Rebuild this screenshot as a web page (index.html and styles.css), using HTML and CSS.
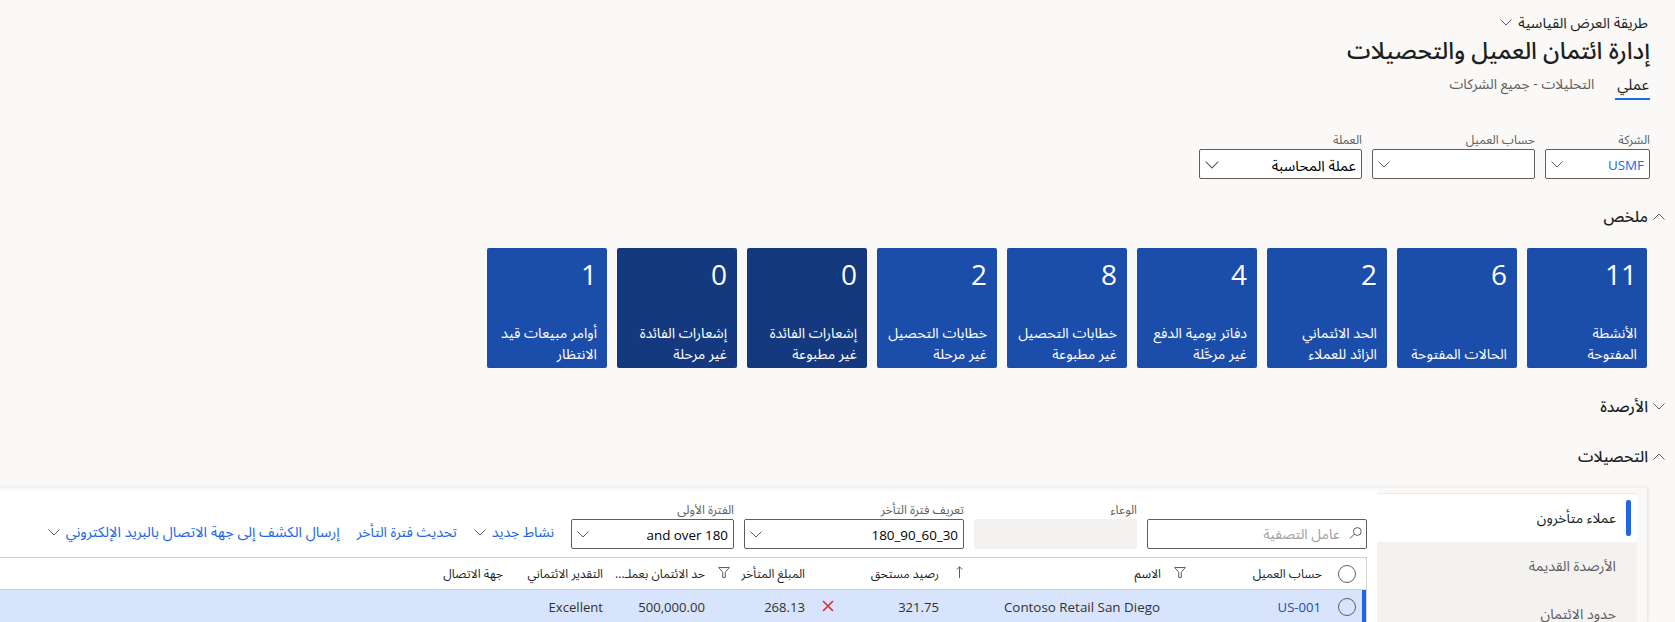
FILE: index.html
```html
<!DOCTYPE html>
<html lang="ar" dir="rtl">
<head>
<meta charset="utf-8">
<title>إدارة ائتمان العميل والتحصيلات</title>
<link rel="stylesheet" href="styles.css">
</head>
<body>
<svg class="defs" aria-hidden="true">
  <symbol id="down" viewBox="0 0 12 7"><path d="M.5.5 6 6 11.5.5"/></symbol>
  <symbol id="up" viewBox="0 0 12 7"><path d="M.5 6.5 6 1l5.5 5.5"/></symbol>
  <symbol id="filter" viewBox="0 0 12 11"><path d="M.7.5h10.6L7.3 5.2v5.2H4.7V5.2z"/></symbol>
</svg>
<header class="page-head">
  <button class="view">طريقة العرض القياسية<svg class="chev"><use href="#down"/></svg></button>
  <h1>إدارة ائتمان العميل والتحصيلات</h1>
  <nav class="tabs"><a class="tab active">عملي</a><a class="tab">التحليلات - جميع الشركات</a></nav>
  <div class="filters">
    <label class="field company"><span>الشركة</span><div class="box link"><b>USMF</b><svg class="chev"><use href="#down"/></svg></div></label>
    <label class="field"><span>حساب العميل</span><div class="box"><b></b><svg class="chev"><use href="#down"/></svg></div></label>
    <label class="field"><span>العملة</span><div class="box"><b class="arabic">عملة المحاسبة</b><svg class="chev big"><use href="#down"/></svg></div></label>
  </div>
</header>

<h2 class="section summary"><svg class="chev"><use href="#up"/></svg>ملخص</h2>
<div class="tiles">
  <div class="tile"><strong>11</strong><span>الأنشطة<br>المفتوحة</span></div>
  <div class="tile"><strong>6</strong><span>الحالات المفتوحة</span></div>
  <div class="tile"><strong>2</strong><span>الحد الائتماني<br>الزائد للعملاء</span></div>
  <div class="tile"><strong>4</strong><span>دفاتر يومية الدفع<br>غير مرحَّلة</span></div>
  <div class="tile"><strong>8</strong><span>خطابات التحصيل<br>غير مطبوعة</span></div>
  <div class="tile"><strong>2</strong><span>خطابات التحصيل<br>غير مرحلة</span></div>
  <div class="tile zero"><strong>0</strong><span>إشعارات الفائدة<br>غير مطبوعة</span></div>
  <div class="tile zero"><strong>0</strong><span>إشعارات الفائدة<br>غير مرحلة</span></div>
  <div class="tile"><strong>1</strong><span>أوامر مبيعات قيد<br>الانتظار</span></div>
</div>
<h2 class="section balances"><svg class="chev"><use href="#down"/></svg>الأرصدة</h2>
<h2 class="section collections"><svg class="chev"><use href="#up"/></svg>التحصيلات</h2>

<section class="panel">
  <nav class="side">
    <a class="side-tab active">عملاء متأخرون</a>
    <a class="side-tab">الأرصدة القديمة</a>
    <a class="side-tab">حدود الائتمان</a>
  </nav>
  <div class="content">
    <div class="toolbar">
      <div class="search"><svg viewBox="0 0 13 12"><circle cx="8.3" cy="4.5" r="3.9"/><path d="M5.4 7.3.6 11.6"/></svg>عامل التصفية</div>
      <label class="field"><span>الوعاء</span><div class="box disabled"></div></label>
      <label class="field wide"><span>تعريف فترة التأخر</span><div class="box"><b dir="ltr">180_90_60_30</b><svg class="chev"><use href="#down"/></svg></div></label>
      <label class="field"><span>الفترة الأولى</span><div class="box"><b dir="ltr">and over 180</b><svg class="chev"><use href="#down"/></svg></div></label>
      <div class="actions">
        <button>نشاط جديد<svg class="chev"><use href="#down"/></svg></button>
        <button>تحديث فترة التأخر</button>
        <button class="send">إرسال الكشف إلى جهة الاتصال بالبريد الإلكتروني<svg class="chev"><use href="#down"/></svg></button>
      </div>
    </div>
    <div class="grid">
      <div class="row head">
        <i class="pick"></i>
        <div>حساب العميل<svg class="filter"><use href="#filter"/></svg></div>
        <div>الاسم<svg class="arrow" viewBox="0 0 7 12"><path d="M3.5 12V.8M.7 3.6 3.5.8l2.8 2.8"/></svg></div>
        <div>رصيد مستحق</div>
        <div>المبلغ المتأخر<svg class="filter"><use href="#filter"/></svg></div>
        <div>حد الائتمان بعملـ...</div>
        <div>التقدير الائتماني</div>
        <div>جهة الاتصال</div>
      </div>
      <div class="row selected">
        <i class="pick"></i>
        <div class="account"><bdi>US-001</bdi></div>
        <div class="name">Contoso Retail San Diego</div>
        <div>321.75<svg class="cross" viewBox="0 0 12 12"><path d="m1 1 10 10M11 1 1 11"/></svg></div>
        <div>268.13</div>
        <div>500,000.00</div>
        <div>Excellent</div>
        <div></div>
      </div>
    </div>
  </div>
</section>
</body>
</html>
```
FILE: styles.css
```css
* { box-sizing: border-box; }
html, body { height: 622px; overflow: hidden; }
body {
  margin: 0;
  display: flex;
  flex-direction: column;
  background: #faf9f8;
  color: #201f1e;
  font: 14px/20px "Open Sans", "Noto Sans Arabic", "DejaVu Sans", sans-serif;
  white-space: nowrap;
}
svg { fill: none; stroke: #605e5c; stroke-width: 1; flex: none; }
.defs { display: none; }
.chev { width: 12px; height: 7px; }
button { border: 0; padding: 0; background: none; font: inherit; color: inherit; display: flex; align-items: center; }
h1, h2 { margin: 0; font-weight: 400; }

.page-head { padding: 13px 25px 0; }
.view { font-size: 14.7px; line-height: 20px; gap: 6px; padding-right: 2px; position: relative; top: -1px; }
h1 { font-size: 23.7px; line-height: 34px; font-weight: 500; }
.tabs { display: flex; gap: 21px; height: 33px; }
.tab { height: 33px; padding-top: 7px; color: #605e5c; }
.tab.active { color: #201f1e; font-size: 15px; border-bottom: 2px solid #2266e3; padding: 7px 1px 0 2px; }

.filters { display: flex; gap: 10px; padding-top: 31px; }
.field { display: flex; flex-direction: column; width: 163px; color: #605e5c; }
.field > span { font-size: 12.2px; line-height: 18px; height: 18px; }
.company { width: 105px; }
.wide { width: 220px; }
.box {
  height: 30px; display: flex; align-items: center; justify-content: space-between;
  padding: 1px 5px 0 5px;
  background: #fff; border: 1px solid #605e5c; border-radius: 2px; color: #000;
}
.box b { font-weight: 400; font-size: 13.4px; }
.box b.arabic { font-size: 14.7px; }
.box.link b { color: #2266e3; }
.box.disabled { background: #f3f2f1; border: 0; }
.box .big { width: 14px; height: 8px; }

.section { display: flex; align-items: center; gap: 5px; padding-right: 10px; font-size: 15.5px; line-height: 24px; font-weight: 500; }
.summary { margin-top: 25px; }
.tiles { display: flex; gap: 10px; padding: 20px 28px 0 0; }
.tile {
  width: 120px; height: 120px; padding: 6px 10px 4px;
  display: flex; flex-direction: column; justify-content: space-between;
  background: #1b4dab; color: #fff; border-radius: 2px;
  font-size: 14.2px; line-height: 21px;
}
.tile.zero { background: #14397f; }
.tile strong { font-weight: 400; font-size: 28px; line-height: 40px; }
.balances { margin-top: 26px; }
.collections { margin-top: 26px; }

.panel { margin: 19px 28px 0 0; flex: 1; min-height: 0; display: flex; border-top: 1px solid #f3f2f1; box-shadow: 1px 0 3px rgba(0,0,0,.1); }
.side { width: 260px; margin-right: 10px; margin-top: 5px; border-top: 1px solid #edebe9; background: #f3f2f1; flex: none; overflow: hidden; }
.side-tab { display: flex; align-items: center; height: 48px; padding-right: 21px; color: #605e5c; font-size: 14.2px; }
.side-tab.active { background: #fff; color: #201f1e; padding-right: 6px; gap: 10px; font-size: 14px; }
.side-tab.active::before { content: ""; width: 5px; height: 36px; border-radius: 2px; background: #2266e3; }

.content { flex: 1; min-width: 0; margin-top: 2px; background: #fff; padding-right: 10px; overflow: hidden; }
.toolbar { display: flex; align-items: flex-end; gap: 10px; height: 59px; }
.search {
  width: 220px; height: 30px; display: flex; align-items: center; gap: 9px; padding-right: 4px;
  border: 1px solid #605e5c; border-radius: 2px; color: #a19f9d;
}
.search svg { width: 13px; height: 12px; margin-bottom: 3px; }
.actions { display: flex; gap: 17px; height: 30px; padding-right: 7px; color: #2266e3; font-size: 14.1px; }
.actions button { gap: 6px; padding-bottom: 4px; }
.actions .send { font-size: 14.5px; }

.grid { margin-top: 8px; border: 1px solid #d2d0ce; border-width: 1px 1px 0 0; }
.row { display: grid; grid-template-columns: 44px 161px 222px 134px 100px 102px 100px 1fr; height: 32px; align-items: center; }
.row > div { display: flex; align-items: center; justify-content: space-between; }
.head { font-size: 12.2px; border-bottom: 1px solid #d2d0ce; }
.head .filter { width: 12px; height: 11px; margin-left: 13px; margin-bottom: 3px; }
.head .arrow { width: 7px; height: 12px; margin-left: 17px; margin-bottom: 3px; }
.pick { width: 18px; height: 18px; border: 1px solid #605e5c; border-radius: 50%; margin-right: 10px; }
.selected { height: 34px; background: #d8e4fc; box-shadow: inset -4px 0 #2266e3; font-size: 13.1px; color: #323130; }
.selected .account { color: #1b4dab; padding-right: 1px; }
.selected .name { padding-right: 1px; font-size: 13.4px; }
.cross { width: 12px; height: 12px; stroke: #d13438; stroke-width: 1.7; margin-left: 17px; margin-bottom: 2px; }
```
